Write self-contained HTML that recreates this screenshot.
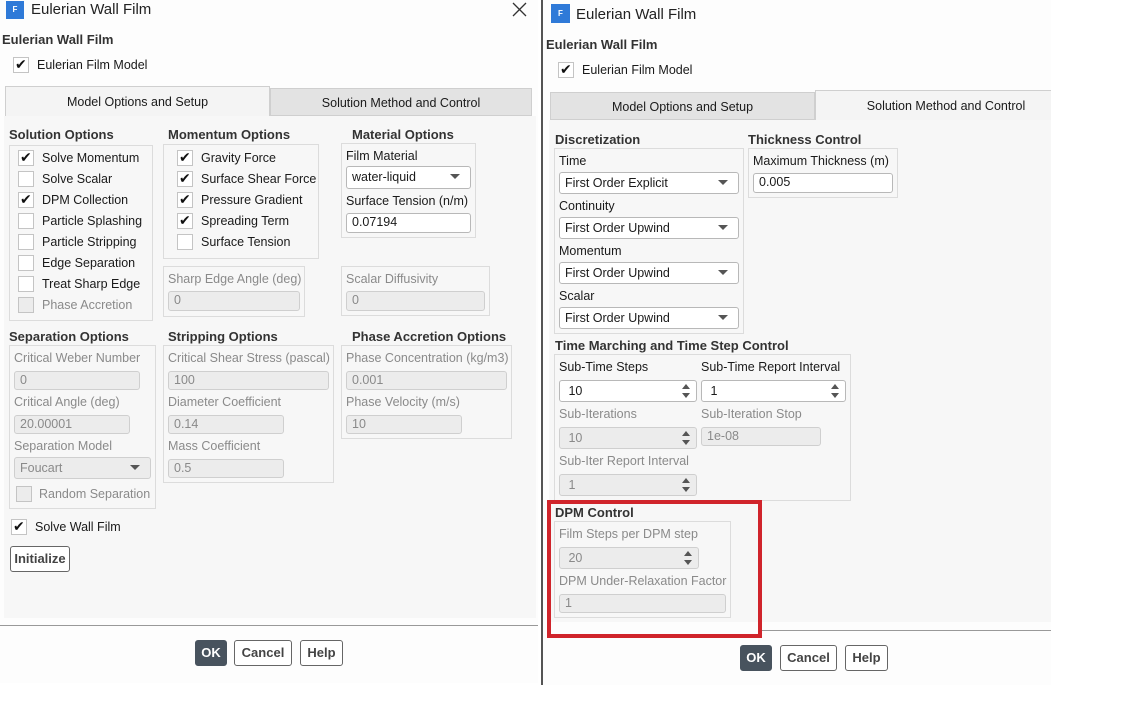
<!DOCTYPE html>
<html><head><meta charset="utf-8"><style>
*{box-sizing:border-box;margin:0;padding:0}
body{width:1131px;height:711px;background:#fff;position:relative;overflow:hidden;font-family:"Liberation Sans","DejaVu Sans",sans-serif;font-size:12.5px;color:#1a1a1a}
div,span{position:absolute}
.t{line-height:16px;white-space:nowrap}
.g{color:#8a8a8a}
.b{font-weight:bold;color:#333;font-size:13px}
.box{border:1px solid #dcdcdc}
.in{background:#fff;border:1px solid #b8b8b8;border-radius:3px;padding-left:5px;line-height:17px;font-size:12.5px}
.dis{background:#ececec;border:1px solid #cfcfcf;color:#8a8a8a}
.cb{width:16px;height:16px;border:1px solid #c4c4c4;background:#fff}
.cb.d{background:#ececec}
.ck::after{content:"✔";position:absolute;left:1px;top:-2px;font-size:14px;color:#111}
.dd::after{content:"";position:absolute;right:10px;top:7px;border-left:5px solid transparent;border-right:5px solid transparent;border-top:5px solid #555}
.sp::after{content:"";position:absolute;right:6px;top:3px;border-left:4px solid transparent;border-right:4px solid transparent;border-bottom:5px solid #555}
.sp::before{content:"";position:absolute;right:6px;bottom:3px;border-left:4px solid transparent;border-right:4px solid transparent;border-top:5px solid #555}
.btn{border:1px solid #666;border-radius:3px;background:#fff;font-weight:bold;color:#444;text-align:center;line-height:24px;font-size:13px}
.ok{background:#48535e;color:#fff;border-color:#48535e}
.icon{background:#2f7ad8;color:#fff;font-size:8px;font-weight:bold;text-align:center;line-height:18px}
</style></head><body>

<!-- LEFT DIALOG -->
<div style="left:0;top:0;width:538px;height:683px;background:#fdfdfd"></div>
<div class="icon" style="left:6px;top:1px;width:18px;height:18px">F</div>
<div class="t" style="left:31px;top:1px;font-size:15px;line-height:18px;color:#222">Eulerian Wall Film</div>
<svg style="position:absolute;left:512px;top:2px" width="15" height="15"><path d="M1 1L14 14M14 1L1 14" stroke="#333" stroke-width="1.3"/></svg>
<div class="t b" style="left:2px;top:32px">Eulerian Wall Film</div>
<div class="cb ck" style="left:13px;top:57px"></div>
<div class="t" style="left:37px;top:57px">Eulerian Film Model</div>
<div style="left:5px;top:86px;width:265px;height:30px;background:#f4f4f4;border:1px solid #cfcfcf;border-bottom:none"></div>
<div class="t" style="left:5px;top:94px;width:265px;text-align:center">Model Options and Setup</div>
<div style="left:270px;top:88px;width:262px;height:28px;background:#e3e3e3;border:1px solid #cfcfcf"></div>
<div class="t" style="left:270px;top:95px;width:262px;text-align:center">Solution Method and Control</div>
<div style="left:4px;top:116px;width:532px;height:502px;background:#f7f7f7"></div>

<div class="t b" style="left:9px;top:127px">Solution Options</div>
<div class="box" style="left:9px;top:145px;width:144px;height:176px"></div>
<div class="cb ck" style="left:18px;top:150px"></div><div class="t" style="left:42px;top:150px">Solve Momentum</div>
<div class="cb" style="left:18px;top:171px"></div><div class="t" style="left:42px;top:171px">Solve Scalar</div>
<div class="cb ck" style="left:18px;top:192px"></div><div class="t" style="left:42px;top:192px">DPM Collection</div>
<div class="cb" style="left:18px;top:213px"></div><div class="t" style="left:42px;top:213px">Particle Splashing</div>
<div class="cb" style="left:18px;top:234px"></div><div class="t" style="left:42px;top:234px">Particle Stripping</div>
<div class="cb" style="left:18px;top:255px"></div><div class="t" style="left:42px;top:255px">Edge Separation</div>
<div class="cb" style="left:18px;top:276px"></div><div class="t" style="left:42px;top:276px">Treat Sharp Edge</div>
<div class="cb d" style="left:18px;top:297px"></div><div class="t g" style="left:42px;top:297px">Phase Accretion</div>

<div class="t b" style="left:168px;top:127px">Momentum Options</div>
<div class="box" style="left:163px;top:144px;width:156px;height:115px"></div>
<div class="cb ck" style="left:177px;top:150px"></div><div class="t" style="left:201px;top:150px">Gravity Force</div>
<div class="cb ck" style="left:177px;top:171px"></div><div class="t" style="left:201px;top:171px">Surface Shear Force</div>
<div class="cb ck" style="left:177px;top:192px"></div><div class="t" style="left:201px;top:192px">Pressure Gradient</div>
<div class="cb ck" style="left:177px;top:213px"></div><div class="t" style="left:201px;top:213px">Spreading Term</div>
<div class="cb" style="left:177px;top:234px"></div><div class="t" style="left:201px;top:234px">Surface Tension</div>

<div class="t b" style="left:352px;top:127px">Material Options</div>
<div class="box" style="left:341px;top:143px;width:135px;height:95px"></div>
<div class="t" style="left:346px;top:148px">Film Material</div>
<div class="in dd" style="left:346px;top:166px;width:125px;height:23px;line-height:21px">water-liquid</div>
<div class="t" style="left:346px;top:193px">Surface Tension (n/m)</div>
<div class="in" style="left:346px;top:213px;width:125px;height:20px">0.07194</div>

<div class="box" style="left:163px;top:266px;width:142px;height:51px"></div>
<div class="t g" style="left:168px;top:271px">Sharp Edge Angle (deg)</div>
<div class="in dis" style="left:168px;top:291px;width:132px;height:20px">0</div>
<div class="box" style="left:341px;top:266px;width:149px;height:50px"></div>
<div class="t g" style="left:346px;top:271px">Scalar Diffusivity</div>
<div class="in dis" style="left:346px;top:291px;width:139px;height:20px">0</div>

<div class="t b" style="left:9px;top:329px">Separation Options</div>
<div class="box" style="left:9px;top:345px;width:147px;height:164px"></div>
<div class="t g" style="left:14px;top:350px">Critical Weber Number</div>
<div class="in dis" style="left:14px;top:371px;width:126px;height:19px">0</div>
<div class="t g" style="left:14px;top:394px">Critical Angle (deg)</div>
<div class="in dis" style="left:14px;top:415px;width:116px;height:19px">20.00001</div>
<div class="t g" style="left:14px;top:438px">Separation Model</div>
<div class="in dis dd" style="left:14px;top:457px;width:137px;height:22px;line-height:20px">Foucart</div>
<div class="cb d" style="left:16px;top:486px"></div>
<div class="t g" style="left:39px;top:486px">Random Separation</div>

<div class="t b" style="left:168px;top:329px">Stripping Options</div>
<div class="box" style="left:163px;top:345px;width:171px;height:138px"></div>
<div class="t g" style="left:168px;top:350px">Critical Shear Stress (pascal)</div>
<div class="in dis" style="left:168px;top:371px;width:161px;height:19px">100</div>
<div class="t g" style="left:168px;top:394px">Diameter Coefficient</div>
<div class="in dis" style="left:168px;top:415px;width:116px;height:19px">0.14</div>
<div class="t g" style="left:168px;top:438px">Mass Coefficient</div>
<div class="in dis" style="left:168px;top:459px;width:116px;height:19px">0.5</div>

<div class="t b" style="left:352px;top:329px">Phase Accretion Options</div>
<div class="box" style="left:341px;top:345px;width:171px;height:94px"></div>
<div class="t g" style="left:346px;top:350px">Phase Concentration (kg/m3)</div>
<div class="in dis" style="left:346px;top:371px;width:161px;height:19px">0.001</div>
<div class="t g" style="left:346px;top:394px">Phase Velocity (m/s)</div>
<div class="in dis" style="left:346px;top:415px;width:116px;height:19px">10</div>

<div class="cb ck" style="left:11px;top:519px"></div>
<div class="t" style="left:35px;top:519px">Solve Wall Film</div>
<div class="btn" style="left:10px;top:546px;width:60px;height:26px;line-height:24px">Initialize</div>

<div style="left:0;top:625px;width:538px;height:1px;background:#999"></div>
<div class="btn ok" style="left:195px;top:640px;width:32px;height:26px">OK</div>
<div class="btn" style="left:234px;top:640px;width:58px;height:26px">Cancel</div>
<div class="btn" style="left:300px;top:640px;width:43px;height:26px">Help</div>

<div style="left:541px;top:0;width:2px;height:685px;background:#555"></div>

<!-- RIGHT DIALOG -->
<div style="left:543px;top:0;width:508px;height:685px;background:#fdfdfd"></div>
<div class="icon" style="left:551px;top:4px;width:19px;height:19px;line-height:19px">F</div>
<div class="t" style="left:576px;top:6px;font-size:15px;line-height:18px;color:#222">Eulerian Wall Film</div>
<div class="t b" style="left:546px;top:37px">Eulerian Wall Film</div>
<div class="cb ck" style="left:558px;top:62px"></div>
<div class="t" style="left:582px;top:62px">Eulerian Film Model</div>
<div style="left:550px;top:92px;width:265px;height:28px;background:#e3e3e3;border:1px solid #cfcfcf"></div>
<div class="t" style="left:550px;top:99px;width:265px;text-align:center">Model Options and Setup</div>
<div style="left:815px;top:90px;width:236px;height:30px;background:#f4f4f4;border-top:1px solid #cfcfcf;border-left:1px solid #cfcfcf"></div>
<div class="t" style="left:815px;top:98px;width:262px;text-align:center">Solution Method and Control</div>
<div style="left:549px;top:120px;width:502px;height:502px;background:#f7f7f7"></div>

<div class="t b" style="left:555px;top:132px">Discretization</div>
<div class="box" style="left:554px;top:148px;width:190px;height:186px"></div>
<div class="t" style="left:559px;top:153px">Time</div>
<div class="in dd" style="left:559px;top:172px;width:180px;height:22px;line-height:20px">First Order Explicit</div>
<div class="t" style="left:559px;top:198px">Continuity</div>
<div class="in dd" style="left:559px;top:217px;width:180px;height:22px;line-height:20px">First Order Upwind</div>
<div class="t" style="left:559px;top:243px">Momentum</div>
<div class="in dd" style="left:559px;top:262px;width:180px;height:22px;line-height:20px">First Order Upwind</div>
<div class="t" style="left:559px;top:288px">Scalar</div>
<div class="in dd" style="left:559px;top:307px;width:180px;height:22px;line-height:20px">First Order Upwind</div>

<div class="t b" style="left:748px;top:132px">Thickness Control</div>
<div class="box" style="left:748px;top:148px;width:150px;height:50px"></div>
<div class="t" style="left:753px;top:153px">Maximum Thickness (m)</div>
<div class="in" style="left:753px;top:173px;width:140px;height:20px">0.005</div>

<div class="t b" style="left:555px;top:338px">Time Marching and Time Step Control</div>
<div class="box" style="left:554px;top:354px;width:297px;height:147px"></div>
<div class="t" style="left:559px;top:359px">Sub-Time Steps</div>
<div class="in sp" style="left:559px;top:380px;width:138px;height:22px;line-height:20px">&nbsp;10</div>
<div class="t" style="left:701px;top:359px">Sub-Time Report Interval</div>
<div class="in sp" style="left:701px;top:380px;width:145px;height:22px;line-height:20px">&nbsp;1</div>
<div class="t g" style="left:559px;top:406px">Sub-Iterations</div>
<div class="in dis sp" style="left:559px;top:427px;width:138px;height:22px;line-height:20px">&nbsp;10</div>
<div class="t g" style="left:701px;top:406px">Sub-Iteration Stop</div>
<div class="in dis" style="left:701px;top:427px;width:120px;height:19px">1e-08</div>
<div class="t g" style="left:559px;top:453px">Sub-Iter Report Interval</div>
<div class="in dis sp" style="left:559px;top:474px;width:138px;height:22px;line-height:20px">&nbsp;1</div>

<div class="t b" style="left:555px;top:505px">DPM Control</div>
<div class="box" style="left:554px;top:521px;width:177px;height:97px"></div>
<div class="t g" style="left:559px;top:526px">Film Steps per DPM step</div>
<div class="in dis sp" style="left:559px;top:547px;width:140px;height:22px;line-height:20px">&nbsp;20</div>
<div class="t g" style="left:559px;top:573px">DPM Under-Relaxation Factor</div>
<div class="in dis" style="left:559px;top:594px;width:167px;height:19px">1</div>
<div style="left:547px;top:500px;width:215px;height:138px;border:4px solid #d0242b"></div>

<div style="left:762px;top:630px;width:289px;height:1px;background:#999"></div>
<div class="btn ok" style="left:740px;top:645px;width:32px;height:26px">OK</div>
<div class="btn" style="left:780px;top:645px;width:57px;height:26px">Cancel</div>
<div class="btn" style="left:845px;top:645px;width:43px;height:26px">Help</div>
</body></html>
